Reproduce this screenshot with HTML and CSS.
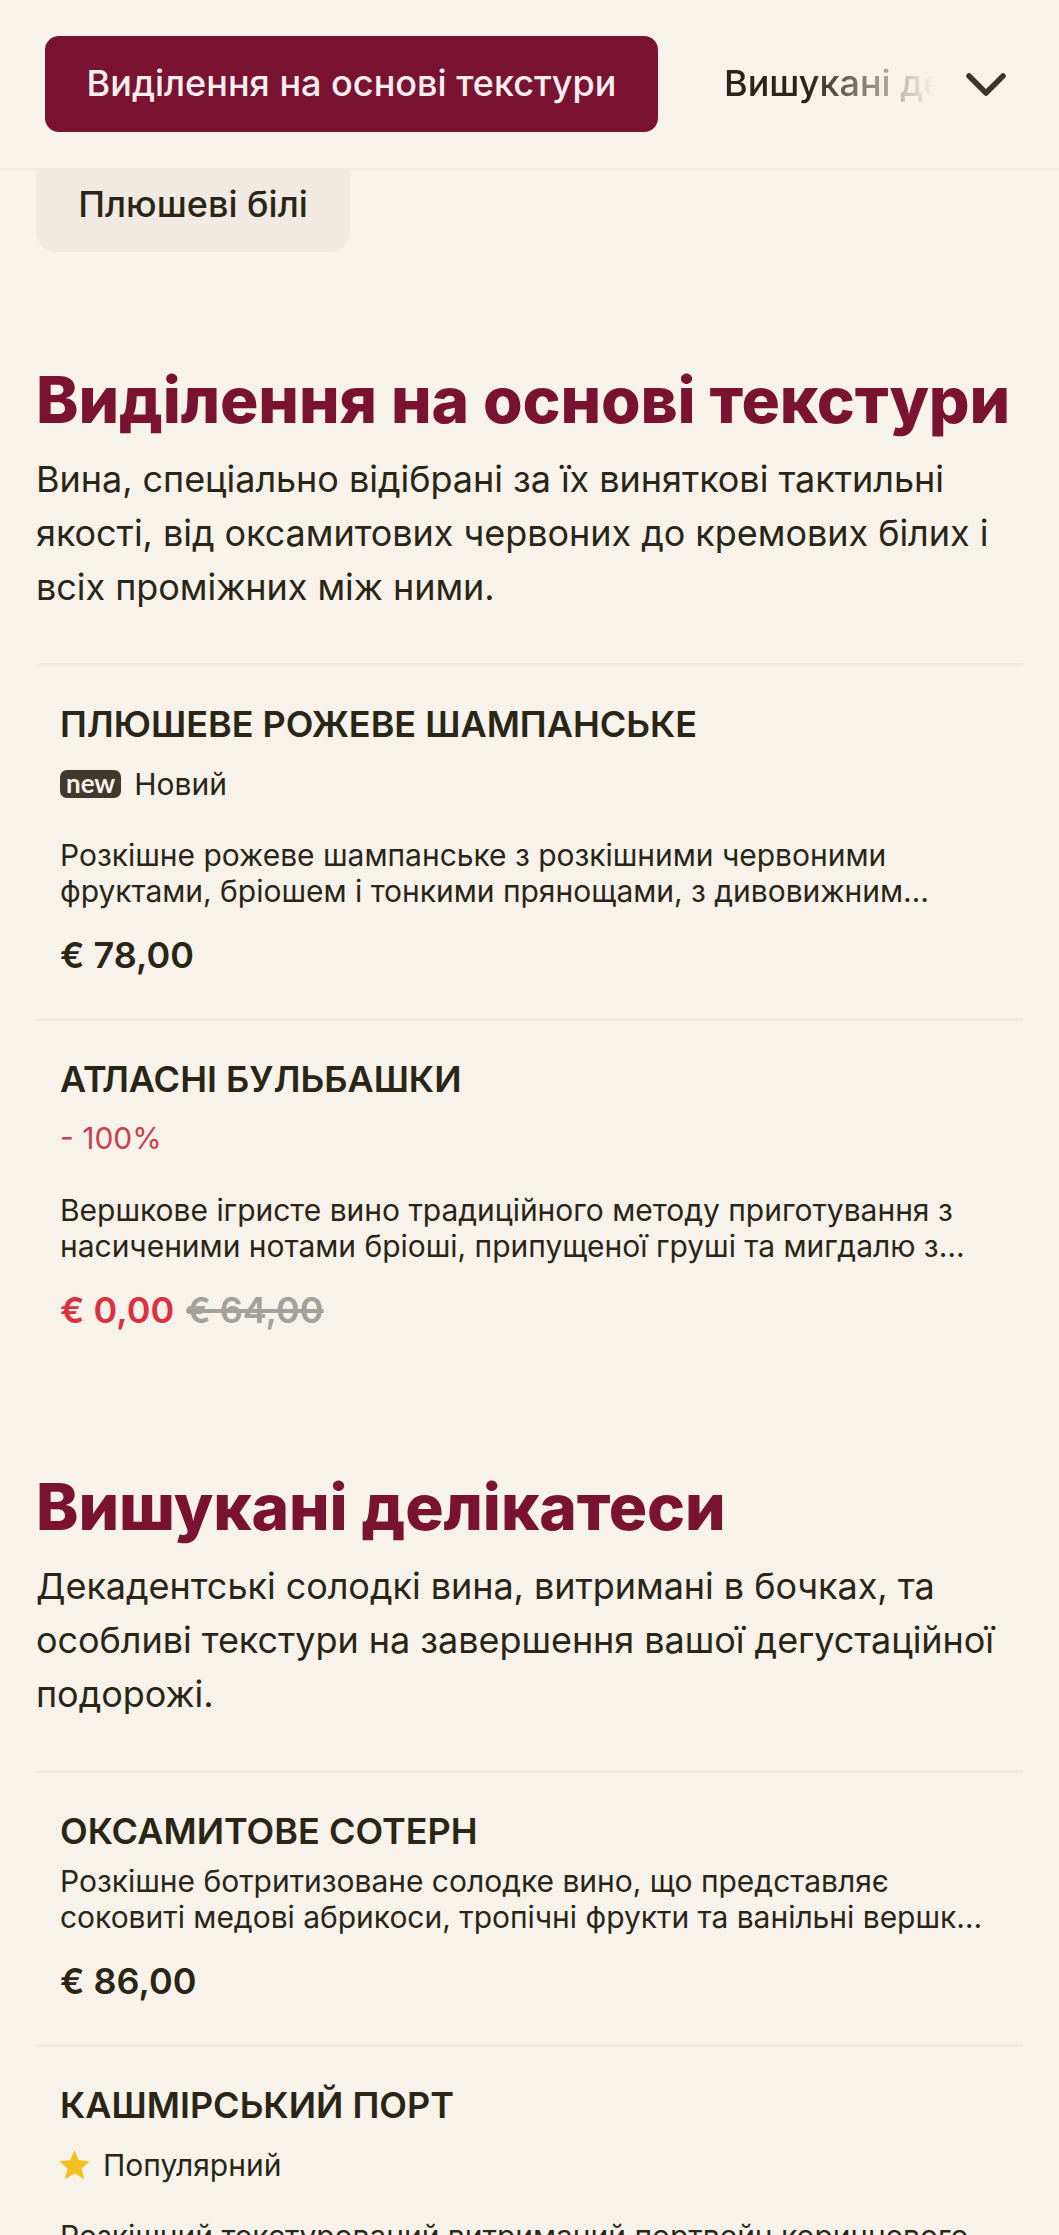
FILE: index.html
```html
<!DOCTYPE html>
<html lang="uk">
<head>
<meta charset="utf-8">
<title>Меню</title>
<link rel="stylesheet" href="styles.css">
</head>
<body>
<header class="tabs">
  <a class="tab-active">Виділення на основі текстури</a>
  <div class="tab-rest"><span>Вишукані делікатеси</span></div>
  <svg class="chevron" viewBox="0 0 40 23" width="40" height="23"><path d="M3 3 L20 20 L37 3" fill="none" stroke="#3a3628" stroke-width="5.5" stroke-linecap="round" stroke-linejoin="round"/></svg>
</header>
<main class="page">
  <div class="chip">Плюшеві білі</div>

  <section class="section">
    <h2>Виділення на основі текстури</h2>
    <p class="lead">Вина, спеціально відібрані за їх виняткові тактильні якості, від оксамитових червоних до кремових білих і всіх проміжних між ними.</p>
    <ul class="items">
      <li class="item">
        <h3>Плюшеве рожеве шампанське</h3>
        <div class="tag"><span class="new">new</span><span>Новий</span></div>
        <p class="desc">Розкішне рожеве шампанське з розкішними червоними фруктами, бріошем і тонкими прянощами, з дивовижним кремовим муссом.</p>
        <div class="price">€ 78,00</div>
      </li>
      <li class="item">
        <h3>Атласні бульбашки</h3>
        <div class="tag sale">- 100%</div>
        <p class="desc">Вершкове ігристе вино традиційного методу приготування з насиченими нотами бріоші, припущеної груші та мигдалю з шовковистим післясмаком.</p>
        <div class="price"><span class="now">€ 0,00</span> <s class="was">€ 64,00</s></div>
      </li>
    </ul>
  </section>

  <section class="section">
    <h2>Вишукані делікатеси</h2>
    <p class="lead">Декадентські солодкі вина, витримані в бочках, та особливі текстури на завершення вашої дегустаційної подорожі.</p>
    <ul class="items">
      <li class="item">
        <h3>Оксамитове сотерн</h3>
        <p class="desc tight">Розкішне ботритизоване солодке вино, що представляє соковиті медові абрикоси, тропічні фрукти та ванільні вершки з довгим післясмаком.</p>
        <div class="price">€ 86,00</div>
      </li>
      <li class="item">
        <h3>Кашмірський порт</h3>
        <div class="tag"><svg class="star" viewBox="1 1.5 22 21" width="31" height="30"><path d="M12 1.5l3.1 7.2 7.8.7-5.9 5.1 1.8 7.7L12 18.1l-6.8 4.1 1.8-7.7-5.9-5.1 7.8-.7z" fill="#f5c01f"/></svg><span>Популярний</span></div>
        <p class="desc">Розкішний текстурований витриманий портвейн коричневого кольору з нотами карамелі, горіхів та сухофруктів.</p>
      </li>
    </ul>
  </section>
</main>
</body>
</html>
```
FILE: styles.css
```css
* { box-sizing: border-box; }
html, body { margin: 0; padding: 0; }
body {
  height: 2235px;
  overflow: hidden;
  background: #f7f3eb;
  color: #2a2616;
  font-family: Inter, "Liberation Sans", sans-serif;
}
.tabs {
  position: relative;
  z-index: 2;
  height: 170px;
  padding: 0 51px 0 45px;
  display: flex;
  align-items: center;
  background: #f7f3eb;
  border-bottom: 2px solid #efebe3;
}
.tab-active {
  flex: none;
  width: 613px;
  height: 96px;
  padding-bottom: 2px;
  display: flex;
  align-items: center;
  justify-content: center;
  background: #7a1232;
  color: #f9eef0;
  border-radius: 14px;
  font-size: 36px;
  font-weight: 500;
}
.tab-rest {
  flex: none;
  width: 211px;
  margin-left: 66px;
  margin-right: 31px;
  padding-bottom: 2px;
  overflow: hidden;
  white-space: nowrap;
  font-size: 36px;
  font-weight: 500;
  -webkit-mask-image: linear-gradient(90deg, #000 40%, transparent 100%);
  mask-image: linear-gradient(90deg, #000 40%, transparent 100%);
}
.chevron { flex: none; }
.page { padding: 0 36px; }
.chip {
  width: 314px;
  height: 96px;
  margin-top: -14px;
  display: flex;
  align-items: center;
  justify-content: center;
  background: #f0eae3;
  border-radius: 20px;
  font-size: 36px;
  font-weight: 500;
}
.section { margin-top: 108.5px; }
.section + .section { margin-top: 95px; }
h2 {
  margin: 0;
  color: #7a1232;
  font-size: 64px;
  line-height: 78px;
  font-weight: 800;
  letter-spacing: -0.1px;
}
.lead {
  margin: 13px 0 49.7px;
  font-size: 36px;
  line-height: 54px;
  letter-spacing: -0.05px;
}
.items {
  list-style: none;
  margin: 0;
  padding: 0;
}
.item {
  padding: 36px 24px 41px;
  border-top: 3px solid #efebe3;
}
h3 {
  margin: 0;
  font-size: 36px;
  line-height: 44px;
  font-weight: 600;
  text-transform: uppercase;
}
.tag {
  margin-top: 15.4px;
  display: flex;
  align-items: center;
  gap: 13px;
  height: 44px;
  font-size: 30px;
}
.new {
  padding: 0 6px;
  height: 28px;
  line-height: 26px;
  background: #3f3a2b;
  color: #f7f3eb;
  border-radius: 7px;
  font-family: Lato, sans-serif;
  font-size: 26px;
  font-weight: 700;
}
.sale { color: #c9404e; }
.desc {
  margin: 31.4px 0 0;
  font-size: 30px;
  line-height: 36px;
  letter-spacing: -0.025px;
  display: -webkit-box;
  -webkit-box-orient: vertical;
  -webkit-line-clamp: 2;
  overflow: hidden;
}
.desc.tight { margin-top: 9.7px; }
.price {
  margin-top: 24px;
  font-size: 36px;
  line-height: 44px;
  font-weight: 600;
}
.now { color: #dc2f3f; }
.was { color: #a3a19b; margin-left: 3px; text-decoration-thickness: 4px; }
.star { flex: none; margin-left: -1px; margin-right: 0; }
```
